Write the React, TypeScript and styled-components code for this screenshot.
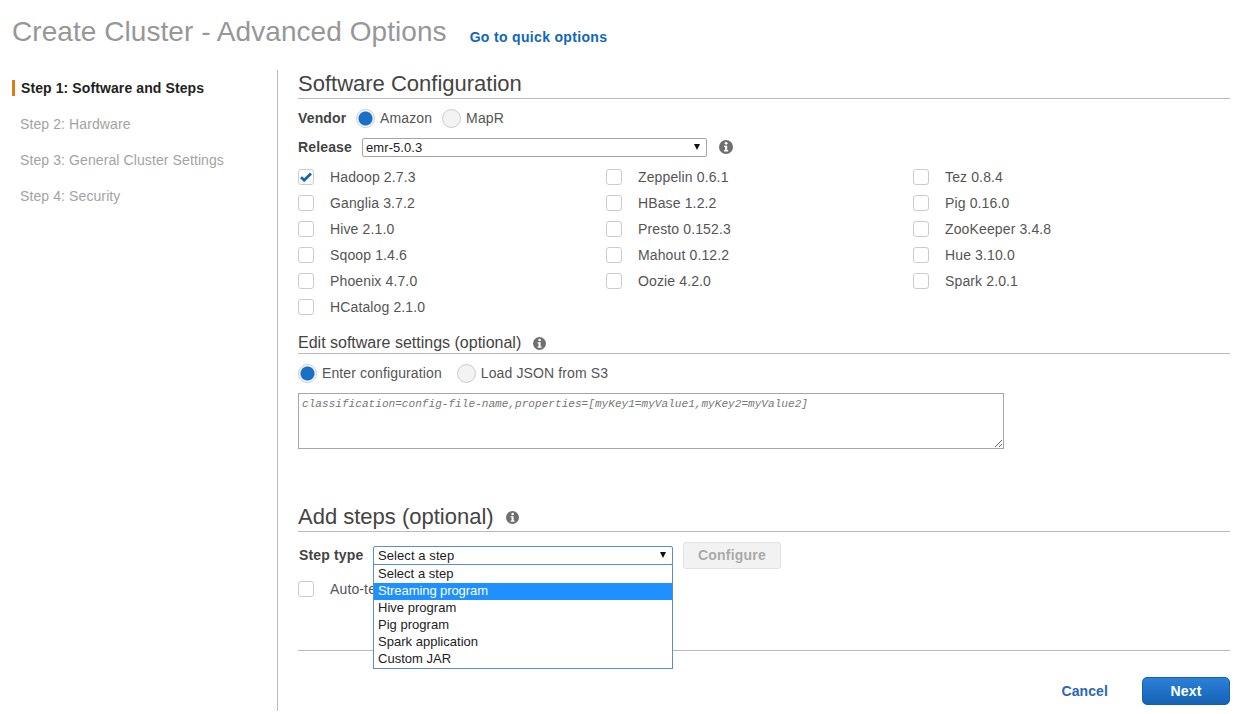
import React from "react";
import styled, { createGlobalStyle } from "styled-components";

const Global = createGlobalStyle`
  html, body { margin: 0; padding: 0; background: #fff; }
  body { font-family: "Liberation Sans", Arial, sans-serif; font-size: 14px; color: #444; overflow: hidden; }
  * { box-sizing: border-box; }
`;

const Page = styled.div`
  width: 1259px;
  height: 714px;
  display: flex;
  flex-direction: column;
`;
const Header = styled.header`
  height: 70px;
  padding: 14px 0 0 12px;
  display: flex;
  align-items: flex-start;
  gap: 23px;
`;
const Title = styled.h1`
  margin: 0;
  font-size: 28px;
  line-height: 36px;
  font-weight: 400;
  letter-spacing: 0.06px;
  color: #979797;
`;
const QuickLink = styled.a`
  margin-top: 15px;
  line-height: 16px;
  font-size: 14px;
  font-weight: 700;
  letter-spacing: 0.33px;
  color: #1166bb;
`;
const Body = styled.div`
  display: flex;
  height: 641px;
`;
const Sidebar = styled.nav`
  width: 278px;
  border-right: 1px solid #bbb;
  padding: 10px 0 0 12px;
  display: flex;
  flex-direction: column;
  gap: 20px;
`;
const StepItem = styled.div<{ $active?: boolean }>`
  height: 16px;
  line-height: 16px;
  padding-left: ${(p) => (p.$active ? 6 : 8)}px;
  font-size: 14px;
  letter-spacing: 0.1px;
  border-left: ${(p) => (p.$active ? "3px solid #e47911" : "none")};
  font-weight: ${(p) => (p.$active ? 700 : 400)};
  color: ${(p) => (p.$active ? "#222" : "#a3a3a3")};
`;
const Main = styled.main`
  width: 932px;
  margin-left: 20px;
  display: flex;
  flex-direction: column;
  position: relative;
`;
const SectionTitle = styled.h2`
  margin: 0;
  height: 29px;
  line-height: 28px;
  font-size: 22px;
  font-weight: 400;
  color: #444;
  border-bottom: 1px solid #bbb;
  display: flex;
  align-items: center;
  gap: 12px;
`;
const SubTitle = styled.h3`
  margin: 0;
  height: 23px;
  padding-top: 2px;
  line-height: 20px;
  font-size: 16px;
  font-weight: 400;
  color: #444;
  border-bottom: 1px solid #bbb;
  display: flex;
  align-items: center;
  gap: 12px;
`;
const Row = styled.div`
  display: flex;
  align-items: center;
`;
const VendorRow = styled(Row)`
  height: 20px;
  margin-top: 9px;
`;
const ReleaseRow = styled(Row)`
  height: 20px;
  margin-top: 9px;
`;
const FieldLabel = styled.span<{ $w: number }>`
  width: ${(p) => p.$w}px;
  flex: none;
  font-weight: 700;
  font-size: 14px;
  letter-spacing: 0.15px;
  color: #444;
`;
const RadioOption = styled.label<{ $gap: number }>`
  display: inline-flex;
  align-items: center;
  gap: 5px;
  margin-right: ${(p) => p.$gap}px;
  color: #555;
  font-size: 14px;
  letter-spacing: 0.12px;
`;
const RadioDot = styled.span<{ $on?: boolean }>`
  width: 19px;
  height: 19px;
  border-radius: 50%;
  flex: none;
  border: 1px solid #ccc;
  background: ${(p) =>
    p.$on
      ? "radial-gradient(circle, #1a6fc9 0 6.5px, #2b7bd0 6.6px, #fff 7.6px)"
      : "#f3f3f3"};
`;
const SelectBox = styled.div<{ $w: number; $focus?: boolean }>`
  width: ${(p) => p.$w}px;
  height: 19px;
  border: 1px solid ${(p) => (p.$focus ? "#5b8dd0" : "#a6a6a6")};
  border-radius: 2px;
  padding: 0 6px 0 ${(p) => (p.$focus ? 4 : 3)}px;
  display: flex;
  align-items: center;
  justify-content: space-between;
  font-size: 13px;
  letter-spacing: 0.08px;
  color: #222;
  background: #fff;
`;
const Caret = styled.span`
  width: 0;
  height: 0;
  border-left: 3.5px solid transparent;
  border-right: 3.5px solid transparent;
  border-top: 6px solid #111;
`;
const InfoWrap = styled.span`
  display: inline-flex;
  flex: none;
`;
const ReleaseInfo = styled(InfoWrap)`
  margin-left: 12px;
`;
const CheckGrid = styled.div`
  display: grid;
  grid-template-columns: 308px 307px 1fr;
  grid-auto-flow: column;
  grid-template-rows: repeat(6, 26px);
  margin-top: 7px;
`;
const CheckItem = styled.label`
  display: flex;
  align-items: center;
  gap: 16px;
  font-size: 14px;
  letter-spacing: 0.13px;
  color: #555;
`;
const CheckBox = styled.span`
  width: 16px;
  height: 16px;
  flex: none;
  border: 1px solid #ccc;
  border-radius: 3px;
  background: #fff;
  display: flex;
  align-items: center;
  justify-content: center;
`;
const SubSection = styled.div`
  margin-top: 11px;
`;
const SettingsRow = styled(Row)`
  height: 20px;
  margin-top: 9px;
`;
const ConfigArea = styled.textarea`
  display: block;
  width: 706px;
  height: 56px;
  margin-top: 10px;
  padding: 4px 3px 3px;
  border: 1px solid #a6a6a6;
  border-radius: 0;
  outline: none;
  font-family: "Liberation Mono", monospace;
  font-style: italic;
  font-size: 11.1px;
  line-height: 13px;
  background: #fff;
  &::placeholder { color: #777; opacity: 1; }
`;
const StepsSection = styled.div`
  margin-top: 54px;
`;
const StepRow = styled(Row)`
  margin-top: 9px;
  height: 28px;
  position: relative;
`;
const StepLabel = styled(FieldLabel)`
  padding-left: 1px;
`;
const ConfigureButton = styled.button`
  width: 98px;
  height: 27px;
  margin-left: 10px;
  border: 1px solid #e1e1e1;
  border-radius: 3px;
  background: #f2f2f2;
  color: #aaa;
  font-family: inherit;
  font-size: 14px;
  font-weight: 700;
  letter-spacing: 0.2px;
  padding: 0;
`;
const DropList = styled.div`
  position: absolute;
  left: 75px;
  top: 23px;
  width: 300px;
  height: 105px;
  padding-top: 1px;
  border: 1px solid #5b8dd0;
  background: #fff;
  z-index: 2;
`;
const DropOption = styled.div<{ $hl?: boolean }>`
  height: 17px;
  line-height: 15px;
  padding-left: 4px;
  font-size: 13px;
  letter-spacing: ${(p) => (p.$hl ? -0.08 : 0.02)}px;
  background: ${(p) => (p.$hl ? "#1e90ff" : "transparent")};
  color: ${(p) => (p.$hl ? "#fff" : "#222")};
`;
const AutoRow = styled(CheckItem)`
  height: 26px;
  margin-top: 7px;
`;
const Footer = styled.footer`
  margin-top: 48px;
  border-top: 1px solid #bbb;
  padding-top: 26px;
  display: flex;
  justify-content: flex-end;
  align-items: center;
  gap: 34px;
`;
const CancelLink = styled.a`
  font-size: 14px;
  font-weight: 700;
  letter-spacing: 0.1px;
  color: #2a66b8;
`;
const NextButton = styled.button`
  width: 88px;
  height: 28px;
  border: 1px solid #1560ad;
  border-radius: 5px;
  background: linear-gradient(#2b80d8, #1463b5);
  color: #fff;
  font-family: inherit;
  font-size: 14px;
  font-weight: 700;
  letter-spacing: 0.2px;
  padding: 0;
`;
const Filler = styled.span``;

const InfoIcon = ({ size = 14 }: { size?: number }) => (
  <svg width={size} height={size} viewBox="0 0 14 14">
    <circle cx="7" cy="7" r="7" fill="#6f6f6f" />
    <circle cx="7.1" cy="3.3" r="1.4" fill="#fff" />
    <path d="M5 5.7h3.2v4.4h1v1.4H5v-1.4h1V7.1H5z" fill="#fff" />
  </svg>
);

const Tick = () => (
  <svg width="12" height="10" viewBox="0 0 12 10">
    <path d="M1 5.2 L4.2 8.2 L11 1.4" fill="none" stroke="#1166bb" strokeWidth="2.8" />
  </svg>
);

const apps: [string, boolean?][] = [
  ["Hadoop 2.7.3", true],
  ["Ganglia 3.7.2"],
  ["Hive 2.1.0"],
  ["Sqoop 1.4.6"],
  ["Phoenix 4.7.0"],
  ["HCatalog 2.1.0"],
  ["Zeppelin 0.6.1"],
  ["HBase 1.2.2"],
  ["Presto 0.152.3"],
  ["Mahout 0.12.2"],
  ["Oozie 4.2.0"],
];
const apps3 = ["Tez 0.8.4", "Pig 0.16.0", "ZooKeeper 3.4.8", "Hue 3.10.0", "Spark 2.0.1"];
const options = ["Select a step", "Streaming program", "Hive program", "Pig program", "Spark application", "Custom JAR"];

export default function App() {
  return (
    <Page>
      <Global />
      <Header>
        <Title>Create Cluster - Advanced Options</Title>
        <QuickLink>Go to quick options</QuickLink>
      </Header>
      <Body>
        <Sidebar>
          <StepItem $active>Step 1: Software and Steps</StepItem>
          <StepItem>Step 2: Hardware</StepItem>
          <StepItem>Step 3: General Cluster Settings</StepItem>
          <StepItem>Step 4: Security</StepItem>
        </Sidebar>
        <Main>
          <SectionTitle>Software Configuration</SectionTitle>
          <VendorRow>
            <FieldLabel $w={58}>Vendor</FieldLabel>
            <RadioOption $gap={10}><RadioDot $on />Amazon</RadioOption>
            <RadioOption $gap={0}><RadioDot />MapR</RadioOption>
          </VendorRow>
          <ReleaseRow>
            <FieldLabel $w={64}>Release</FieldLabel>
            <SelectBox $w={345}>emr-5.0.3<Caret /></SelectBox>
            <ReleaseInfo><InfoIcon /></ReleaseInfo>
          </ReleaseRow>
          <CheckGrid>
            {apps.map(([name, on]) => (
              <CheckItem key={name}><CheckBox>{on && <Tick />}</CheckBox>{name}</CheckItem>
            ))}
            <Filler />
            {apps3.map((name) => (
              <CheckItem key={name}><CheckBox />{name}</CheckItem>
            ))}
          </CheckGrid>
          <SubSection>
            <SubTitle>Edit software settings (optional) <InfoWrap><InfoIcon size={13} /></InfoWrap></SubTitle>
            <SettingsRow>
              <RadioOption $gap={15}><RadioDot $on />Enter configuration</RadioOption>
              <RadioOption $gap={0}><RadioDot />Load JSON from S3</RadioOption>
            </SettingsRow>
            <ConfigArea placeholder="classification=config-file-name,properties=[myKey1=myValue1,myKey2=myValue2]" />
          </SubSection>
          <StepsSection>
            <SectionTitle>Add steps (optional) <InfoWrap><InfoIcon size={13} /></InfoWrap></SectionTitle>
            <StepRow>
              <StepLabel $w={75}>Step type</StepLabel>
              <SelectBox $w={300} $focus>Select a step<Caret /></SelectBox>
              <ConfigureButton>Configure</ConfigureButton>
              <DropList>
                {options.map((o, i) => (
                  <DropOption key={o} $hl={i === 1}>{o}</DropOption>
                ))}
              </DropList>
            </StepRow>
            <AutoRow><CheckBox />Auto-terminate cluster after last step</AutoRow>
          </StepsSection>
          <Footer>
            <CancelLink>Cancel</CancelLink>
            <NextButton>Next</NextButton>
          </Footer>
        </Main>
      </Body>
    </Page>
  );
}
